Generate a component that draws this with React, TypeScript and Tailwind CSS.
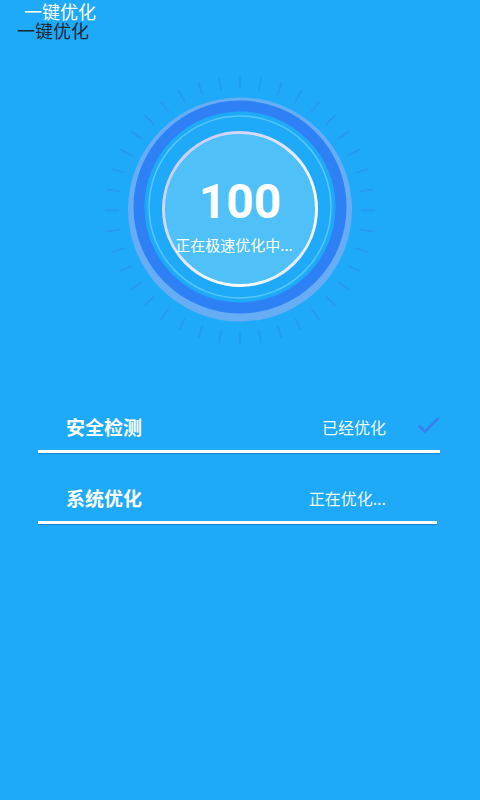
import React from "react";

const CJK = "font-['Noto_Sans_CJK_SC','Noto_Sans',sans-serif]";

function Gauge() {
  // 40 radial ticks round the ring
  const ticks = Array.from({ length: 40 }, (_, i) => {
    const a = (i * 9 * Math.PI) / 180;
    const cx = 140;
    const cy = 140.5;
    return {
      x1: cx + Math.cos(a) * 122,
      y1: cy + Math.sin(a) * 122,
      x2: cx + Math.cos(a) * 134,
      y2: cy + Math.sin(a) * 134,
    };
  });

  return (
    <div className="relative mx-auto mt-[30px] flex h-[280px] w-[280px] flex-col items-center pt-[108px]">
      <svg className="absolute inset-0" width="280" height="280" viewBox="0 0 280 280">
        <defs>
          <linearGradient id="ring" x1="0" y1="0" x2="1" y2="1">
            <stop offset="0%" stopColor="#c3c6f6" />
            <stop offset="45%" stopColor="#dfe3fb" />
            <stop offset="75%" stopColor="#ffffff" />
            <stop offset="100%" stopColor="#c8cdf6" />
          </linearGradient>
        </defs>
        {ticks.map((t, i) => (
          <line
            key={i}
            x1={t.x1}
            y1={t.y1}
            x2={t.x2}
            y2={t.y2}
            stroke="#2b8ee6"
            strokeOpacity="0.55"
            strokeWidth="1.8"
            strokeLinecap="round"
          />
        ))}
        <circle cx="140" cy="139.5" r="107" fill="none" stroke="#66adf6" strokeWidth="10" />
        <circle cx="140" cy="137" r="101" fill="none" stroke="#2e80f5" strokeWidth="11" />
        <circle cx="140" cy="137" r="91" fill="none" stroke="#55c8f9" strokeWidth="1.5" />
        <circle cx="140" cy="139" r="76" fill="#4fc1f8" />
        <circle cx="140" cy="139" r="76.5" fill="none" stroke="url(#ring)" strokeWidth="3" />
      </svg>
      <div className="relative font-['Roboto',sans-serif] text-[48px] font-bold leading-[48px] text-white">
        100
      </div>
      <div className={`relative mr-[12px] mt-[9px] text-[15px] leading-[20px] text-white ${CJK}`}>
        正在极速优化中...
      </div>
    </div>
  );
}

export default function App() {
  return (
    <div className={`min-h-[800px] w-full bg-[#1eaaf8] ${CJK}`}>
      {/* Header */}
      <div className="pt-[2px]">
        <div className="ml-[24px] text-[18px] leading-[19px] text-white">一键优化</div>
        <div className="ml-[17px] mt-[-1px] text-[18px] leading-[20px] text-[#1b2733]">一键优化</div>
      </div>

      <Gauge />

      {/* Status rows */}
      <div className="ml-[38px] mt-[54px] w-[402px]">
        <div className="flex h-[46px] items-center pl-7">
          <span className="text-[19px] font-bold text-white">安全检测</span>
          <div className="ml-auto flex items-center gap-[30px]">
            <span className="text-[16px] text-white/95">已经优化</span>
            <svg width="24" height="24" viewBox="0 0 24 24">
              <polyline
                points="3.5,11.5 9,16.5 21.5,4"
                fill="none"
                stroke="#3a80ee"
                strokeWidth="2.8"
                strokeLinecap="round"
                strokeLinejoin="round"
              />
            </svg>
          </div>
        </div>
        <div className="h-[3px] w-full bg-white shadow-[0_1px_1px_rgba(20,80,180,0.45)]" />

        <div className="mt-[22px] w-[399px]">
          <div className="flex h-[46px] items-center pl-7 pr-[51px]">
            <span className="text-[19px] font-bold text-white">系统优化</span>
            <span className="ml-auto text-[16px] text-white/95">正在优化...</span>
          </div>
          <div className="h-[3px] w-full bg-white shadow-[0_1px_1px_rgba(20,80,180,0.45)]" />
        </div>
      </div>
    </div>
  );
}
